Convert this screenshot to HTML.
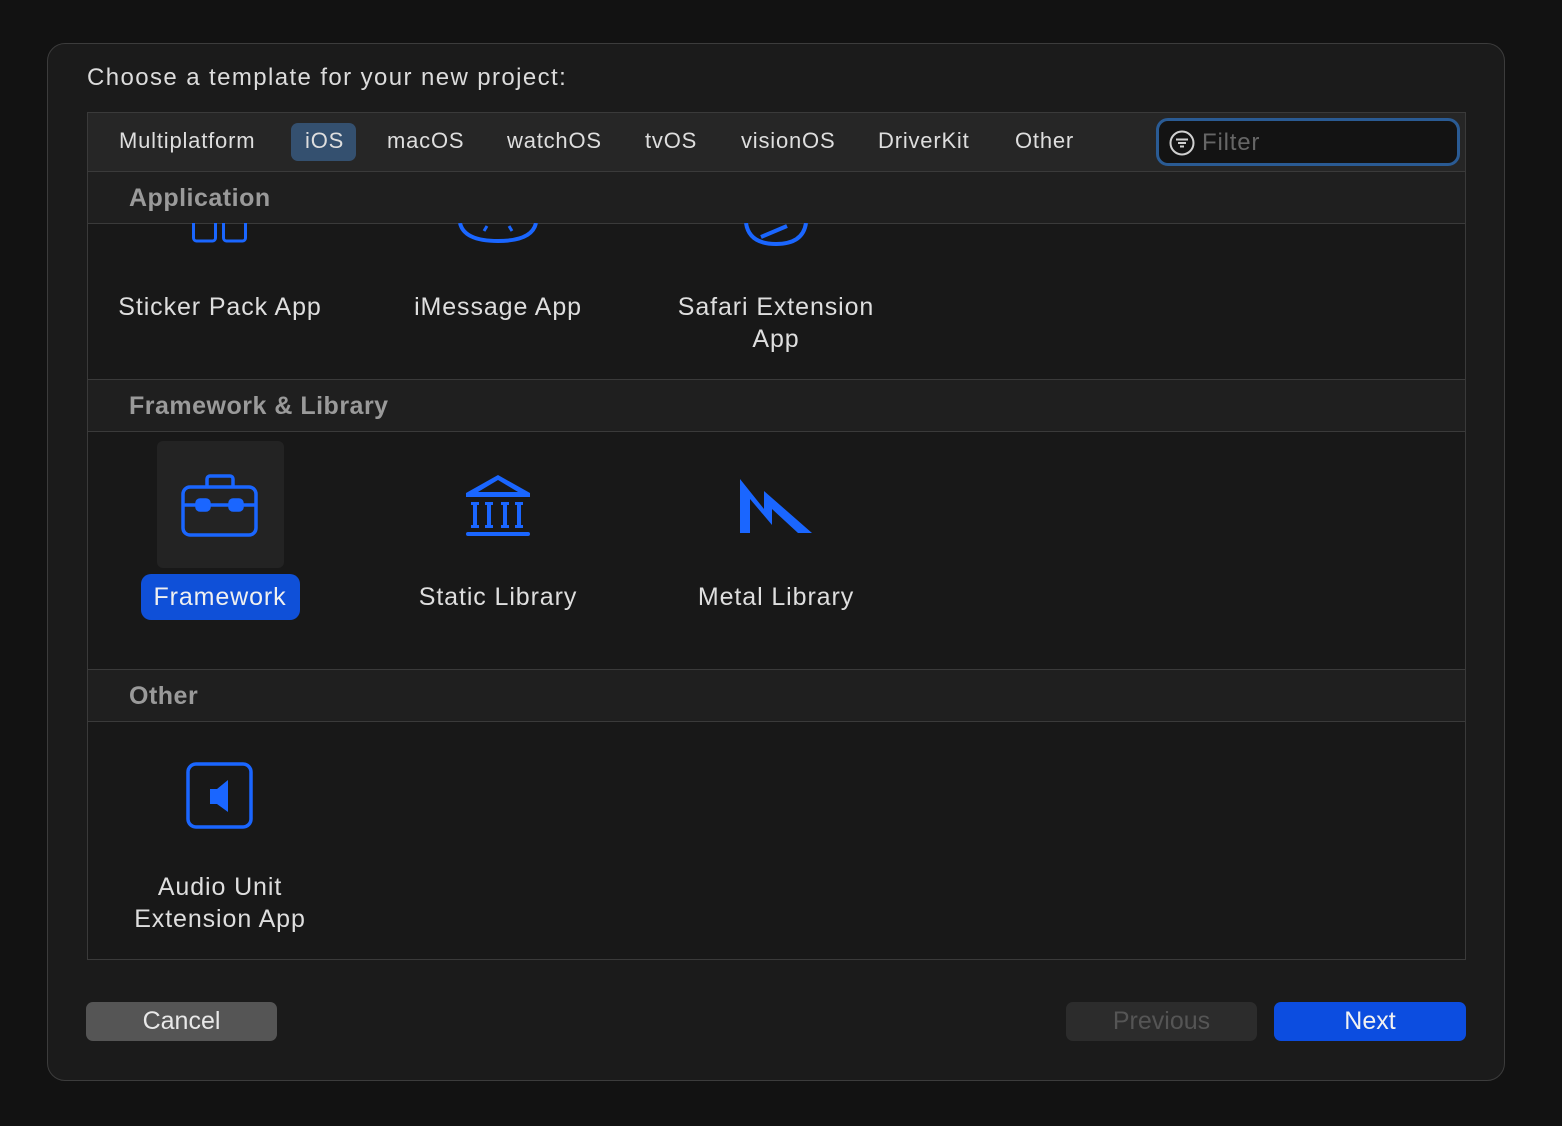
<!DOCTYPE html>
<html><head><style>
body{margin:0;width:1562px;height:1126px;background:#121212;font-family:"Liberation Sans",sans-serif;position:relative;overflow:hidden}
.dlg{position:absolute;left:47px;top:43px;width:1456px;height:1036px;background:#1b1b1b;border:1px solid #3c3c3c;border-radius:18px}
.t{position:absolute;color:#dcdcdc;white-space:nowrap}
.panel{position:absolute;left:87px;top:112px;width:1377px;height:846px;border:1px solid #3a3a3a;background:#181818;overflow:hidden}
.tabs{position:absolute;left:0;top:0;width:100%;height:58px;background:#262626;border-bottom:1px solid #3a3a3a}
.tab{position:absolute;top:28px;transform:translateY(-50%);font-size:22px;color:#dedede;letter-spacing:0.8px}
.hdr{position:absolute;left:0;width:100%;height:51px;background:#1f1f1f;border-top:1px solid #3a3a3a;border-bottom:1px solid #3a3a3a}
.hdr span{position:absolute;left:41px;top:12px;font-size:25px;font-weight:bold;color:#9a9a9a;letter-spacing:0.5px}
.lbl{position:absolute;font-size:25px;color:#dedede;text-align:center;line-height:32px;transform:translateX(-50%);letter-spacing:0.9px;white-space:nowrap}
.btn{position:absolute;top:1002px;height:39px;width:191px;border-radius:7px;font-size:25px;text-align:center;line-height:39px}
</style></head><body>
<div class="dlg"></div>
<div class="t" style="left:87px;top:64px;font-size:24px;letter-spacing:1.4px">Choose a template for your new project:</div>
<div class="panel">
 <div class="tabs">
  <div style="position:absolute;left:203px;top:10px;width:65px;height:38px;background:#34506f;border-radius:7px"></div>
  <div class="tab" style="left:31px">Multiplatform</div>
  <div class="tab" style="left:217px">iOS</div>
  <div class="tab" style="left:299px">macOS</div>
  <div class="tab" style="left:419px">watchOS</div>
  <div class="tab" style="left:557px">tvOS</div>
  <div class="tab" style="left:653px">visionOS</div>
  <div class="tab" style="left:790px">DriverKit</div>
  <div class="tab" style="left:927px">Other</div>
  <div style="position:absolute;left:1068px;top:5px;width:298px;height:42px;border:3px solid #2a5b94;border-radius:12px;background:#131313"></div>
  <svg style="position:absolute;left:1081px;top:17px" width="26" height="26" viewBox="0 0 26 26" fill="none" stroke="#d0d0d0" stroke-width="2"><circle cx="13" cy="13" r="11.5"/><path d="M7 9.5h12M9 13h8M11 16.5h4"/></svg>
  <div class="tab" style="left:1114px;top:30px;color:#666;font-size:24px">Filter</div>
 </div>
 <div class="hdr" style="top:58px"><span>Application</span></div>
 <svg style="position:absolute;left:104px;top:110px" width="60" height="20"><rect x="1.5" y="-10" width="22" height="28" rx="3" fill="none" stroke="#1a66ff" stroke-width="3"/><rect x="31.5" y="-10" width="22" height="28" rx="3" fill="none" stroke="#1a66ff" stroke-width="3"/></svg>
 <svg style="position:absolute;left:370px;top:110px" width="80" height="22"><path d="M2 0 Q6 18 40 18 Q74 18 78 0" fill="none" stroke="#1a66ff" stroke-width="4"/><path d="M26 8l3-5M54 8l-3-5" stroke="#1a66ff" stroke-width="3"/></svg>
 <svg style="position:absolute;left:655px;top:110px" width="66" height="24"><path d="M3 0 Q6 21 33 21 Q60 21 63 0" fill="none" stroke="#1a66ff" stroke-width="4"/><path d="M18 14 L44 3" stroke="#1a66ff" stroke-width="4"/></svg>
 <div class="lbl" style="left:132px;top:178px">Sticker Pack App</div>
 <div class="lbl" style="left:410px;top:178px">iMessage App</div>
 <div class="lbl" style="left:688px;top:178px">Safari Extension<br>App</div>
 <div class="hdr" style="top:266px"><span>Framework &amp; Library</span></div>
 <div style="position:absolute;left:69px;top:328px;width:127px;height:127px;background:#232323;border-radius:6px"></div>
 <svg style="position:absolute;left:93px;top:360px" width="78" height="66" viewBox="0 0 78 66" fill="none" stroke="#1a66ff" stroke-width="3.5"><rect x="2" y="14" width="73" height="48" rx="7"/><path d="M26 14V6a3 3 0 0 1 3-3h20a3 3 0 0 1 3 3v8M2 32h73"/><rect x="16" y="27" width="12" height="10" rx="3" fill="#1a66ff"/><rect x="49" y="27" width="12" height="10" rx="3" fill="#1a66ff"/></svg>
 <svg style="position:absolute;left:377px;top:360px" width="66" height="66" viewBox="0 0 66 66" fill="#1a66ff"><path d="M33 2 L65 20 V24 H1 V20 Z M33 7 L13 19 H53 Z" fill-rule="evenodd"/><rect x="6" y="29" width="8" height="3"/><rect x="8" y="30" width="4" height="24"/><rect x="6" y="52" width="8" height="3"/><rect x="20" y="29" width="8" height="3"/><rect x="22" y="30" width="4" height="24"/><rect x="20" y="52" width="8" height="3"/><rect x="36" y="29" width="8" height="3"/><rect x="38" y="30" width="4" height="24"/><rect x="36" y="52" width="8" height="3"/><rect x="50" y="29" width="8" height="3"/><rect x="52" y="30" width="4" height="24"/><rect x="50" y="52" width="8" height="3"/><rect x="1" y="59" width="64" height="4" rx="2"/></svg>
 <svg style="position:absolute;left:650px;top:364px" width="76" height="58" viewBox="0 0 76 58" fill="#1a66ff"><path d="M2 2 L26 32 V14 L74 56 H60 L34 32 V48 L12 22 V56 H2 Z"/></svg>
 <div style="position:absolute;left:53px;top:461px;width:159px;height:46px;background:#0f50d8;border-radius:10px"></div>
 <div class="lbl" style="left:132px;top:468px;color:#f0f0f0">Framework</div>
 <div class="lbl" style="left:410px;top:468px">Static Library</div>
 <div class="lbl" style="left:688px;top:468px">Metal Library</div>
 <div class="hdr" style="top:556px"><span>Other</span></div>
 <svg style="position:absolute;left:98px;top:649px" width="68" height="68" viewBox="0 0 68 68"><rect x="2" y="2" width="63" height="63" rx="8" fill="none" stroke="#1a66ff" stroke-width="3.5"/><path d="M24 27 H31 L42 18 V50 L31 42 H24 Z" fill="#1a66ff"/></svg>
 <div class="lbl" style="left:132px;top:758px">Audio Unit<br>Extension App</div>
</div>
<div class="btn" style="left:86px;background:#555;color:#e8e8e8">Cancel</div>
<div class="btn" style="left:1066px;background:#2c2c2c;color:#555">Previous</div>
<div class="btn" style="left:1274px;width:192px;background:#0c4de0;color:#f2f2f2">Next</div>
</body></html>
